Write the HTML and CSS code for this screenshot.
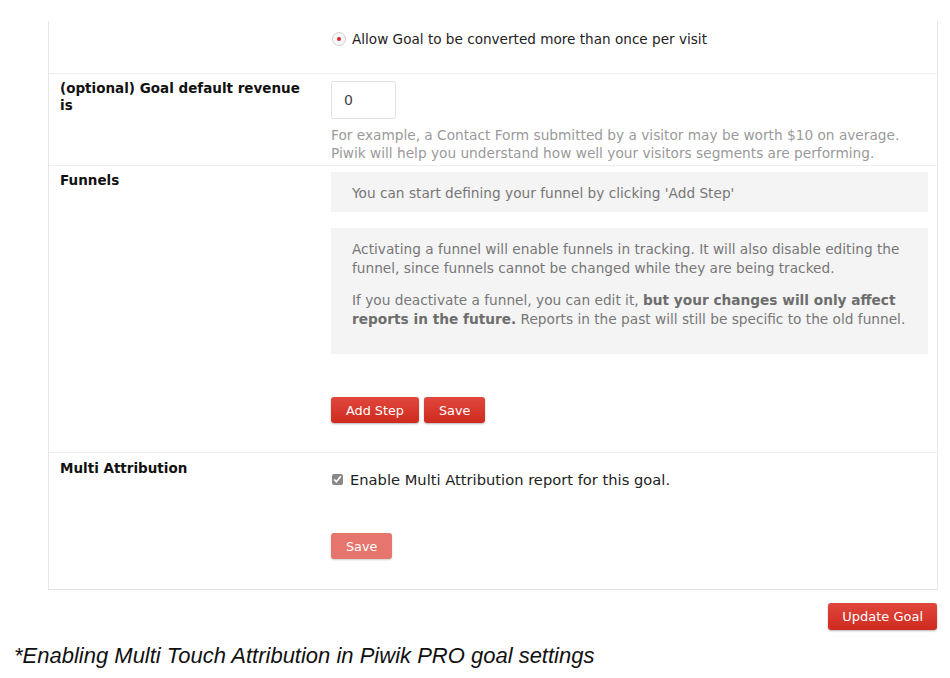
FILE: index.html
```html
<!DOCTYPE html>
<html lang="en">
<head>
    <meta charset="UTF-8">
    <title>Goal settings</title>
    <link rel="stylesheet" href="styles.css">
</head>
<body>
    <div class="goal-form">
        <!-- allow multiple conversions -->
        <div class="row row-allow">
            <div class="label"></div>
            <div class="field">
                <label class="radio">
                    <span class="radio-dot"></span>
                    Allow Goal to be converted more than once per visit
                </label>
            </div>
        </div>

        <!-- revenue -->
        <div class="row row-revenue">
            <div class="label">(optional) Goal default revenue is</div>
            <div class="field">
                <input type="text" class="revenue" value="0">
                <p class="help">For example, a Contact Form submitted by a visitor may be worth $10 on average.<br>Piwik will help you understand how well your visitors segments are performing.</p>
            </div>
        </div>

        <!-- funnels -->
        <div class="row row-funnels">
            <div class="label">Funnels</div>
            <div class="field">
                <div class="notice notice-small">You can start defining your funnel by clicking 'Add Step'</div>
                <div class="notice notice-info">
                    <p>Activating a funnel will enable funnels in tracking. It will also disable editing the funnel, since funnels cannot be changed while they are being tracked.</p>
                    <p>If you deactivate a funnel, you can edit it, <b>but your changes will only affect reports in the future.</b> Reports in the past will still be specific to the old funnel.</p>
                </div>
                <div class="buttons">
                    <button class="btn">Add Step</button>
                    <button class="btn">Save</button>
                </div>
            </div>
        </div>

        <!-- multi attribution -->
        <div class="row row-attribution">
            <div class="label">Multi Attribution</div>
            <div class="field">
                <label class="check">
                    <input type="checkbox" checked>
                    Enable Multi Attribution report for this goal.
                </label>
                <div class="buttons">
                    <button class="btn btn-light">Save</button>
                </div>
            </div>
        </div>
    </div>

    <div class="footer">
        <button class="btn btn-update">Update Goal</button>
    </div>

    <p class="caption">*Enabling Multi Touch Attribution in Piwik PRO goal settings</p>
</body>
</html>
```

FILE: styles.css
```css
body {
    margin: 0;
    padding: 21px 0 0 0;
    background-color: white;
    font-family: "DejaVu Sans", Verdana, sans-serif;
    font-size: 13px;
    color: #222;
}
.goal-form {
    margin-left: 48px;
    width: 888px;
    border: 1px solid #e8e8e8;
    border-top: none;
    border-bottom-color: #e4e4e4;
}
.row {
    display: grid;
    grid-template-columns: 282px 1fr;
    border-bottom: 1px solid #eeeeee;
}
.row:last-child {
    border-bottom: none;
}
.label {
    padding: 6px 26px 0 11px;
    font-weight: bold;
    font-size: 13.5px;
    line-height: 17px;
    color: #111;
}
.field {
    padding-right: 9px;
}
.row-allow {
    height: 52px;
}
.row-allow .field {
    display: flex;
    align-items: center;
    padding-bottom: 16px;
}
.radio {
    display: flex;
    align-items: center;
    font-size: 13.6px;
    color: #222;
}
.check {
    display: flex;
    align-items: center;
    font-size: 14.7px;
    color: #222;
}
.radio-dot {
    width: 12px;
    height: 12px;
    border-radius: 50%;
    border: 1px solid #cfcfcf;
    background: #f7f7f7;
    margin: 0 6px 0 1px;
    position: relative;
}
.radio-dot::after {
    content: "";
    position: absolute;
    left: 4px;
    top: 4px;
    width: 4px;
    height: 4px;
    border-radius: 50%;
    background: #d6262c;
}
.row-revenue {
    height: 91px;
}
.row-revenue .field {
    padding-top: 7px;
}
.revenue {
    width: 65px;
    height: 38px;
    box-sizing: border-box;
    border: 1px solid #e2e2e2;
    border-radius: 2px;
    padding: 0 12px;
    font-family: "DejaVu Sans", Verdana, sans-serif;
    font-size: 14px;
    color: #444;
    display: block;
}
.help {
    margin: 7px 0 0 0;
    font-size: 13.7px;
    line-height: 18px;
    color: #9a9a9a;
}
.row-funnels {
    height: 286px;
}
.row-funnels .field {
    padding-top: 6px;
}
.notice {
    background-color: #f4f4f4;
    color: #777;
    font-size: 13.7px;
    padding: 0 21px;
}
.notice-small {
    height: 40px;
    line-height: 42px;
}
.notice-info {
    margin-top: 16px;
    height: 126px;
    box-sizing: border-box;
    padding-top: 12px;
    line-height: 19px;
}
.notice-info p {
    margin: 0 0 13px 0;
}
.notice-info b {
    color: #6d6d6d;
}
.buttons {
    display: flex;
    gap: 5px;
}
.row-funnels .buttons {
    margin-top: 43px;
}
.btn {
    height: 26px;
    padding: 0 15px;
    border: none;
    border-radius: 3px;
    background: linear-gradient(#e0473c, #cf2a1f);
    box-shadow: 0 1px 2px rgba(0,0,0,0.3);
    color: white;
    font-family: "DejaVu Sans", Verdana, sans-serif;
    font-size: 12.8px;
    cursor: pointer;
}
.btn-light {
    background: #e5756d;
    box-shadow: 0 1px 2px rgba(0,0,0,0.2);
}
.row-attribution {
    height: 136px;
}
.row-attribution .label {
    padding-top: 7px;
}
.row-attribution .field {
    padding-top: 18px;
}
.check input {
    width: 11px;
    height: 11px;
    margin: 0 7px 0 1px;
    accent-color: #888;
}
.row-attribution .buttons {
    margin-top: 45px;
}
.footer {
    width: 937px;
    display: flex;
    justify-content: flex-end;
    margin-top: 13px;
}
.btn-update {
    height: 27px;
    padding: 0 14px;
    font-size: 13px;
}
.caption {
    margin: 13px 0 0 14px;
    font-family: "Liberation Sans", Arial, sans-serif;
    font-style: italic;
    font-size: 22px;
    color: #111;
}
```
